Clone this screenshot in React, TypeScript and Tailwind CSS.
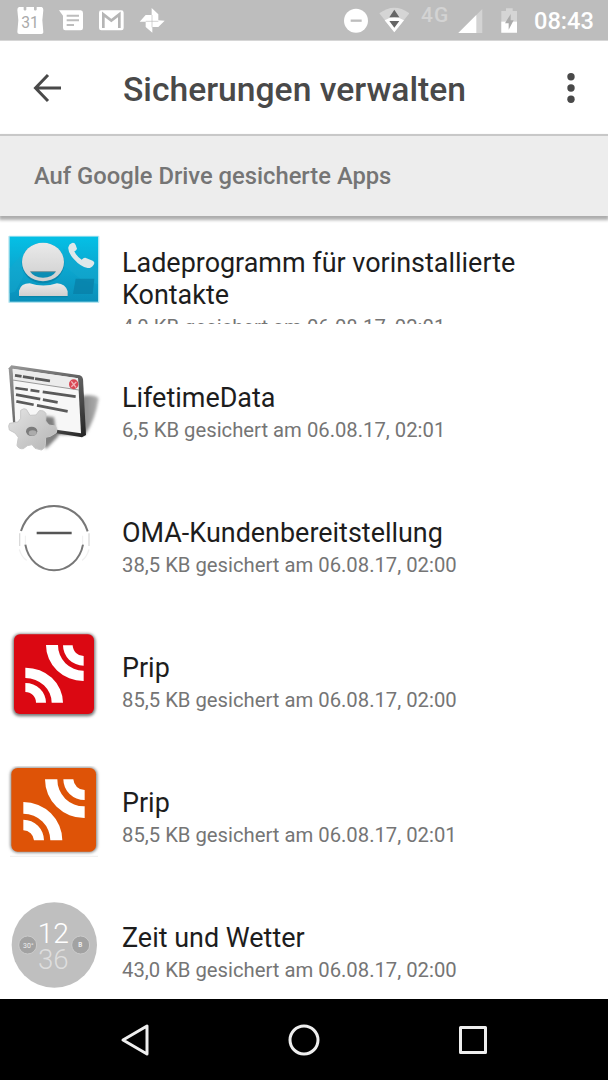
import React from 'react';

interface BackupItem {
  title: string;
  detail: string;
  icon: React.ReactNode;
  clipped?: boolean;
}

const ICON_CLASS = 'w-[110px] h-[105px] shrink-0';

function ContactsIcon() {
  return (
    <svg className={ICON_CLASS} viewBox="0 3 330 315">
      <defs>
        <linearGradient id="contactsBg" x1="0" y1="0" x2="0" y2="1">
          <stop offset="0" stopColor="#04c0e6" />
          <stop offset="0.5" stopColor="#0ba6cf" />
          <stop offset="1" stopColor="#098fb9" />
        </linearGradient>
        <linearGradient id="contactsFg" x1="0" y1="0" x2="0" y2="1">
          <stop offset="0" stopColor="#eaeaea" />
          <stop offset="1" stopColor="#cfcfcf" />
        </linearGradient>
      </defs>
      <rect x="25" y="32" width="273" height="202" rx="3" fill="#b4e4ef" />
      <rect x="29" y="35" width="265" height="195" fill="url(#contactsBg)" />
      <path d="M29 130L62 92L70 155L45 200L29 205Z M190 70L294 130V178L245 165L190 120Z" fill="#17a8cf" opacity="0.45" />
      <path d="M227 161H283L278 207H219Z" fill="#087fa7" opacity="0.75" />
      <path d="M57 217V199Q63 176 89 176Q130 190 171 176Q197 178 203 201V217Z" fill="#0784a8" />
      <path d="M57 213V197Q63 175 89 175Q130 188 171 175Q197 177 203 199V213Z" fill="url(#contactsFg)" />
      <ellipse cx="129" cy="114" rx="64" ry="61" fill="#0786ad" />
      <ellipse cx="129" cy="111" rx="63" ry="58" fill="url(#contactsFg)" />
      <path d="M91 140H167Q158 157 129 158Q101 157 91 140Z" fill="#0b8db4" />
      <path d="M91 140H167" stroke="#75929b" strokeWidth="3" />
      <path
        d="M216 54Q224 52 227 60L231 71Q229 77 223 79Q229 93 245 104Q251 97 256 98L278 107Q286 111 281 119Q274 130 263 129Q241 125 222 103Q203 82 205 67Q207 57 216 54Z"
        fill="#dfe8ea"
      />
    </svg>
  );
}

function WindowGearIcon() {
  return (
    <svg className={ICON_CLASS} viewBox="0 18 330 315">
      <defs>
        <linearGradient id="winEdge" x1="0" y1="0" x2="1" y2="1">
          <stop offset="0" stopColor="#9a9a9a" />
          <stop offset="0.6" stopColor="#5a5a5a" />
          <stop offset="1" stopColor="#222" />
        </linearGradient>
        <linearGradient id="winShadow" x1="0" y1="0" x2="1" y2="0">
          <stop offset="0" stopColor="#444" />
          <stop offset="1" stopColor="#b0b0b0" />
        </linearGradient>
        <linearGradient id="gearFill" x1="0" y1="0" x2="1" y2="1">
          <stop offset="0" stopColor="#e4e4e4" />
          <stop offset="1" stopColor="#b4b4b4" />
        </linearGradient>
        <filter id="winBlur" x="-20%" y="-20%" width="140%" height="140%">
          <feGaussianBlur stdDeviation="4" />
        </filter>
        <filter id="lineBlur" x="-5%" y="-20%" width="110%" height="140%">
          <feGaussianBlur stdDeviation="1.5" />
        </filter>
      </defs>
      <path d="M248 122Q285 118 296 130Q286 195 255 240L170 238L160 225Z" fill="url(#winShadow)" filter="url(#winBlur)" />
      <path d="M34 31L240 61Q248 64 249 72L258 240L246 247L40 214L26 40Z" fill="url(#winEdge)" />
      <path d="M38 41L234 70L243 235L46 207Z" fill="#f7f7f7" />
      <path d="M38 42L234 70L236 105L40 74Z" fill="#ececec" />
      <path d="M38 75L237 105" stroke="#999" strokeWidth="3" />
      <g filter="url(#lineBlur)" stroke="#5a5a5a" strokeWidth="8">
        <path d="M45 61L150 78" strokeDasharray="20 4 34 3 44 0" />
        <path d="M46 99L227 125" strokeDasharray="38 8 27 10 110 0" />
        <path d="M48 119L173 142" strokeDasharray="74 8 60 0" />
        <path d="M49 139L203 169" strokeDasharray="53 10 110 0" />
      </g>
      <ellipse cx="221" cy="88" rx="14" ry="15" fill="#d94754" />
      <path d="M214 79L228 97M229 81L214 95" stroke="#f0b4ba" strokeWidth="4" />
      <path d="M133 183L162 187L166 219L175 244L138 282L128 264Z" fill="#4b4b4b" opacity="0.7" filter="url(#winBlur)" />
      <path
        d="M62 166Q72 158 79 163L90 181L108 180L118 167Q132 165 138 176L137 198L147 210L166 213Q174 225 169 233L151 244L137 247L136 269Q134 282 124 285L105 280L96 269L82 272L70 281Q56 283 51 271L55 247L45 234L28 225Q24 211 29 205L54 201L62 190Z"
        fill="url(#gearFill)"
        stroke="#c8c8c8"
        strokeWidth="3"
        strokeLinejoin="round"
      />
      <ellipse cx="95" cy="229" rx="17" ry="14" fill="#7b7b7b" />
      <ellipse cx="98" cy="234" rx="12" ry="8" fill="#ababab" />
    </svg>
  );
}

function CircleMinusIcon() {
  return (
    <svg className={ICON_CLASS} viewBox="0 18 330 315">
      <g fill="none">
        <path d="M63 123C79 74 117 48 162 48C207 48 248 76 263 124" stroke="#777" strokeWidth="6" />
        <path d="M59 130V168M267 130V168" stroke="#dadada" strokeWidth="4" />
        <path d="M76 137V162M248 137V162" stroke="#efefef" strokeWidth="3" />
        <path d="M76 164C84 210 121 241 162 241C205 241 241 208 249 164" stroke="#777" strokeWidth="6" />
        <path d="M58 178Q65 202 80 211M267 178Q260 202 246 211" stroke="#f0f0f0" strokeWidth="4" />
        <path d="M110 129H215" stroke="#555" strokeWidth="7" />
      </g>
    </svg>
  );
}

function RedWavesIcon() {
  return (
    <svg className={ICON_CLASS} viewBox="0 33 330 315">
      <defs>
        <filter id="redBlur" x="-20%" y="-20%" width="140%" height="140%">
          <feGaussianBlur stdDeviation="4" />
        </filter>
      </defs>
      <rect x="38" y="41" width="248" height="248" rx="22" fill="#777" filter="url(#redBlur)" />
      <rect x="42" y="43" width="240" height="239" rx="18" fill="#db0812" />
      <g fill="#fff">
        <path d="M138 75H174A76 76 0 0 0 251 152V183A112 108 0 0 1 138 75Z" />
        <path d="M189 76H218A33 33 0 0 0 251 108V137A62 61 0 0 1 189 76Z" />
        <path d="M76 143A112 106 0 0 1 189 248H155A79 74 0 0 0 76 174Z" />
        <path d="M76 189A62 59 0 0 1 138 248H108A32 32 0 0 0 76 216Z" />
      </g>
    </svg>
  );
}

function OrangeWavesIcon() {
  return (
    <svg className={ICON_CLASS} viewBox="0 33 330 315">
      <defs>
        <filter id="orangeBlur" x="-20%" y="-20%" width="140%" height="140%">
          <feGaussianBlur stdDeviation="4" />
        </filter>
      </defs>
      <rect x="31" y="37" width="261" height="256" rx="22" fill="#888" filter="url(#orangeBlur)" />
      <path d="M30 304H294" stroke="#eee" strokeWidth="3" />
      <rect x="34" y="39" width="254" height="251" rx="19" fill="#de5307" />
      <g fill="#fff">
        <path d="M135 73H172A80 80 0 0 0 254 154V189A118 116 0 0 1 135 73Z" />
        <path d="M190 73H220A34 34 0 0 0 254 105V135A64 62 0 0 1 190 73Z" />
        <path d="M70 141A117 115 0 0 1 187 256H151A81 80 0 0 0 70 176Z" />
        <path d="M70 194A62 62 0 0 1 132 256H102A32 32 0 0 0 70 226Z" />
      </g>
    </svg>
  );
}

function ClockWeatherIcon() {
  return (
    <svg className={ICON_CLASS} viewBox="0 33 330 315" fontFamily="Roboto, sans-serif">
      <circle cx="163" cy="165" r="128" fill="#bfbfbf" />
      <circle cx="83" cy="165" r="27" fill="#a2a2a2" stroke="#cbcbcb" strokeWidth="3" />
      <circle cx="242" cy="165" r="27" fill="#a2a2a2" stroke="#cbcbcb" strokeWidth="3" />
      <text x="85" y="173" fontSize="21" fill="#eee" textAnchor="middle">30°</text>
      <text x="241" y="172" fontSize="19" fontWeight="700" fill="#eee" textAnchor="middle">B</text>
      <text x="160" y="158" fontSize="84" fontWeight="300" fill="#fff" textAnchor="middle" textLength="94" lengthAdjust="spacingAndGlyphs">12</text>
      <text x="160" y="236" fontSize="84" fontWeight="300" fill="#dedede" textAnchor="middle" textLength="92" lengthAdjust="spacingAndGlyphs">36</text>
    </svg>
  );
}

const ITEMS: BackupItem[] = [
  {
    title: 'Ladeprogramm für vorinstallierte Kontakte',
    detail: '4,0 KB gesichert am 06.08.17, 02:01',
    icon: <ContactsIcon />,
    clipped: true,
  },
  { title: 'LifetimeData', detail: '6,5 KB gesichert am 06.08.17, 02:01', icon: <WindowGearIcon /> },
  { title: 'OMA-Kundenbereitstellung', detail: '38,5 KB gesichert am 06.08.17, 02:00', icon: <CircleMinusIcon /> },
  { title: 'Prip', detail: '85,5 KB gesichert am 06.08.17, 02:00', icon: <RedWavesIcon /> },
  { title: 'Prip', detail: '85,5 KB gesichert am 06.08.17, 02:01', icon: <OrangeWavesIcon /> },
  { title: 'Zeit und Wetter', detail: '43,0 KB gesichert am 06.08.17, 02:00', icon: <ClockWeatherIcon /> },
];

function StatusBar() {
  return (
    <div className="flex h-[41px] shrink-0 items-start justify-between border-b border-[#d6d6d6] bg-[#bdbdbd] pl-[17px] pr-[13px]">
      <div className="flex">
        {/* Calendar */}
        <svg className="h-10 w-[27px]" viewBox="51 0 81 120">
          <path d="M57 21H71V29Q75 34 79 29V21H102V29Q106 34 110 29V21H125Q130 22 130 30L127 61L130 97Q130 102 124 102H58Q52 102 52 96L55 61L52 30Q52 22 57 21Z" fill="#fff" />
          <text x="90" y="83" fontSize="47" fontFamily="Roboto, sans-serif" fill="#aaa" textAnchor="middle">31</text>
        </svg>
        {/* Messages */}
        <svg className="ml-[15px] h-10 w-[25px]" viewBox="177 0 75 120">
          <path d="M177 31H242Q249 32 249 39V84Q249 91 242 91H196Q189 91 189 84V47Z" fill="#fff" />
          <path d="M200 47H237M200 61H237M200 75H222" stroke="#bdbdbd" strokeWidth="6" />
        </svg>
        {/* Mail */}
        <svg className="ml-[14px] h-10 w-[26px]" viewBox="294 0 78 120">
          <rect x="297" y="31" width="74" height="60" rx="7" fill="#fff" />
          <path d="M310 84V43L334 62L358 43V84" fill="none" stroke="#b5b5b5" strokeWidth="8" />
        </svg>
        {/* Pinwheel */}
        <svg className="ml-[15px] h-10 w-[26px]" viewBox="417 0 78 120">
          <path d="M455 62V24L475 43V61L494 62L475 81H457V98L437 81V65H419L437 45H455Z" fill="#fff" />
          <path d="M437 64H475M456 45V82" stroke="#bdbdbd" strokeWidth="2" />
        </svg>
      </div>
      <div className="flex">
        {/* Do not disturb */}
        <svg className="h-10 w-[26px]" viewBox="39 0 78 120">
          <circle cx="78" cy="62" r="36" fill="#fff" />
          <path d="M62 62H95" stroke="#bdbdbd" strokeWidth="7" />
        </svg>
        {/* Wifi */}
        <svg className="ml-[10px] h-10 w-[30px]" viewBox="147 0 90 120">
          <path d="M148 40Q193 6 238 40L193 97Z" fill="#d5d5d5" />
          <path d="M164 61Q193 42 222 61L193 97Z" fill="#fff" />
          <path d="M178 52L193 29L208 52ZM178 63H208L193 83Z" fill="#666" />
        </svg>
        <span className="ml-[12px] mt-[4px] h-6 w-[37px] text-[21px] leading-[23px] font-medium tracking-[1px] text-[#d3d3d3]">4G</span>
        {/* Signal */}
        <svg className="h-10 w-[25px]" viewBox="383 0 75 120">
          <path d="M384 99L456 27V99Z" fill="#d3d3d3" />
          <path d="M384 99L438 45V99Z" fill="#fff" />
        </svg>
        {/* Battery */}
        <svg className="ml-[18px] h-10 w-[17px]" viewBox="512 0 51 120">
          <path d="M513 33H527V25H547V33H560V98H513Z" fill="#d5d5d5" />
          <path d="M513 65H560V98H513Z" fill="#fff" />
          <path d="M541 42L524 70H535V89L550 61H541Z" fill="#ababab" />
        </svg>
        <span className="ml-[16px] mt-[1px] w-[61px] whitespace-nowrap text-[23.6px] leading-10 font-medium text-white">08:43</span>
      </div>
    </div>
  );
}

function Toolbar() {
  return (
    <header className="flex h-[93px] shrink-0 items-center pl-[33px] pr-[30px]">
      <svg className="h-[30px] w-[28px]" viewBox="0 0 28 30" fill="none" stroke="#494949" strokeWidth="3">
        <path d="M15 2L2.5 15L15 28M2 15H28" />
      </svg>
      <h1 className="ml-[62px] mt-[5px] flex-1 whitespace-nowrap text-[33.65px] font-medium text-[#494949]">Sicherungen verwalten</h1>
      <svg className="h-[30px] w-[14px]" viewBox="0 0 14 30" fill="#494949">
        <circle cx="7" cy="3.7" r="3.7" />
        <circle cx="7" cy="15" r="3.7" />
        <circle cx="7" cy="26.3" r="3.7" />
      </svg>
    </header>
  );
}

function BackupRow({ title, detail, icon, clipped = false }: BackupItem) {
  return (
    <li className={`flex shrink-0 ${clipped ? 'h-[130px] items-start pt-[10px]' : 'h-[135px] items-center'}`}>
      {icon}
      <div className={`ml-3 w-[430px] ${clipped ? 'mt-[21px] h-[77px] overflow-hidden' : 'mt-[1px]'}`}>
        <h2 className="text-[26.95px] leading-[32px] text-[#1d1d1d]">{title}</h2>
        <p className="whitespace-nowrap text-[20.25px] leading-[32px] text-[#757575]">{detail}</p>
      </div>
    </li>
  );
}

function NavigationBar() {
  return (
    <nav className="flex h-[81px] shrink-0 items-center justify-between bg-black pl-[119px] pr-[119px]">
      <svg className="h-9 w-8" viewBox="0 0 32 36" fill="none" stroke="#eee" strokeWidth="3" strokeLinejoin="round">
        <path d="M4 18L28 4V32Z" />
      </svg>
      <svg className="h-9 w-9" viewBox="0 0 36 36" fill="none" stroke="#eee" strokeWidth="3">
        <circle cx="18" cy="18" r="14" />
      </svg>
      <svg className="h-9 w-8" viewBox="0 0 32 36" fill="none" stroke="#eee" strokeWidth="3" strokeLinejoin="round">
        <rect x="3.5" y="5.5" width="25" height="25" />
      </svg>
    </nav>
  );
}

export default function App() {
  return (
    <div className="flex h-[1080px] w-[608px] flex-col overflow-hidden bg-white font-[Roboto,sans-serif]">
      <StatusBar />
      <Toolbar />
      <div className="flex h-[82px] shrink-0 items-center border-t-2 border-[#c8c8c8] bg-[#ededed] pl-[34px] shadow-[0_3px_3px_1px_rgba(0,0,0,0.32)]">
        <span className="mt-[2px] text-[23.75px] font-medium text-[#757575]">Auf Google Drive gesicherte Apps</span>
      </div>
      <ul className="flex min-h-0 flex-1 flex-col overflow-hidden">
        {ITEMS.map((item, index) => (
          <BackupRow key={index} {...item} />
        ))}
      </ul>
      <NavigationBar />
    </div>
  );
}
